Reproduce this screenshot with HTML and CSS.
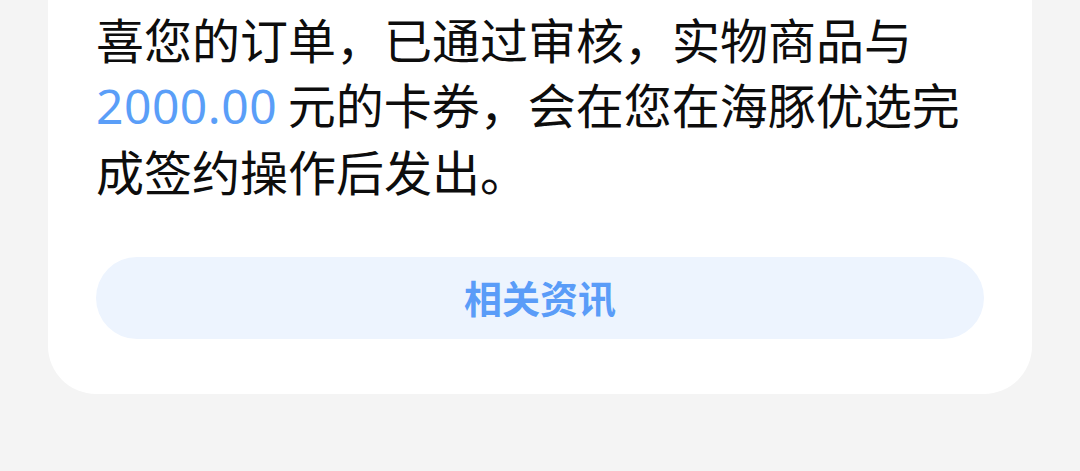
FILE: index.html
```html
<!DOCTYPE html>
<html lang="zh-CN">
<head>
<meta charset="utf-8">
<title>审核通知</title>
<link rel="stylesheet" href="styles.css">
</head>
<body>
<div class="page">
  <div class="card">
    <p class="message">喜您的订单，已通过审核，实物商品与<span class="amount">2000.00</span> 元的卡券，会在您在海豚优选完成签约操作后发出。</p>
    <div class="action">相关资讯</div>
  </div>
</div>
</body>
</html>
```

FILE: styles.css
```css
html, body {
  margin: 0;
  padding: 0;
  background: #f4f4f4;
}

.page {
  width: 1080px;
  height: 471px;
  overflow: hidden;
}

.card {
  margin: 0 48px;
  background: #ffffff;
  border-radius: 0 0 48px 48px;
  padding: 6px 48px 55px;
  display: flex;
  flex-direction: column;
}

.message {
  margin: 0;
  font-family: "Noto Sans CJK SC", sans-serif;
  font-size: 48px;
  line-height: 65px;
  color: #0d0d0d;
}

.amount {
  font-family: "Noto Sans", "Noto Sans CJK SC", sans-serif;
  letter-spacing: 0.5px;
  color: #5a9ef8;
}

.action {
  margin-top: 54px;
  height: 82px;
  box-sizing: border-box;
  padding-bottom: 4px;
  border-radius: 41px;
  background: #edf4fe;
  color: #5a9cf8;
  font-family: "Noto Sans CJK SC", sans-serif;
  font-weight: 700;
  font-size: 38px;
  display: flex;
  align-items: center;
  justify-content: center;
}
```
